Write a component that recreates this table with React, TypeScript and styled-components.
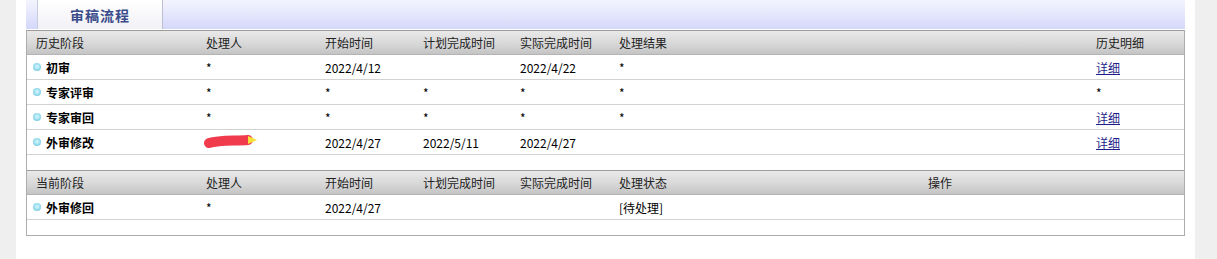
import React from "react";
import styled, { createGlobalStyle } from "styled-components";

const GlobalStyle = createGlobalStyle`
  html, body {
    margin: 0;
    padding: 0;
    background: #efefef;
  }
  body {
    font-family: "Noto Sans CJK SC", "Noto Sans", sans-serif;
    font-size: 12px;
    color: #000;
  }
`;

const HISTORY_COLS = "169px 119px 98px 97px 99px 1fr 98px";
const CURRENT_COLS = "169px 119px 98px 97px 99px 309px 1fr";

const Page = styled.div`
  display: flex;
  min-height: 259px;
  padding: 0 22px 0 16px;
`;

const Panel = styled.div`
  flex: 1;
  background: #fff;
  padding: 0 10px;
  display: flex;
  flex-direction: column;
`;

const TabBar = styled.div`
  height: 29px;
  display: flex;
  padding-left: 11px;
  background: linear-gradient(#f4f4fe, #d4d8f9);
  margin-bottom: 1px;
`;

const Tab = styled.div`
  width: 124px;
  display: flex;
  align-items: center;
  justify-content: center;
  background: linear-gradient(#ffffff, #f1f1f6);
  border-left: 1px solid #c8cce0;
  border-right: 1px solid #bcc0d2;
  font-weight: bold;
  font-size: 14px;
  letter-spacing: 1px;
  color: #3b4c8c;
`;

const Table = styled.div`
  border: 1px solid #acacac;
  border-top: none;
`;

const HeaderRow = styled.div<{ $cols: string }>`
  display: grid;
  grid-template-columns: ${(p) => p.$cols};
  height: 23px;
  align-items: center;
  border-top: 1px solid #9c9c9c;
  border-bottom: 1px solid #b4b4b4;
  background: linear-gradient(#e9e9e9, #d6d6d6 60%, #c4c4c4);
  color: #222;
`;

const Row = styled.div<{ $cols: string }>`
  display: grid;
  grid-template-columns: ${(p) => p.$cols};
  height: 24px;
  align-items: center;
  border-bottom: 1px solid #d2d2d2;
`;

const Blank = styled.div<{ $h: number }>`
  height: ${(p) => p.$h}px;
`;

const Cell = styled.div<{ $pad?: number }>`
  padding-left: ${(p) => p.$pad ?? 10}px;
  white-space: nowrap;
  display: flex;
  align-items: center;
`;

const Stage = styled(Cell)`
  padding-left: 6px;
  gap: 5px;
  font-weight: bold;
`;

const Dot = styled.span`
  width: 8px;
  height: 8px;
  border-radius: 50%;
  background: radial-gradient(circle at 50% 45%, #d8f6fc 0%, #a8e4f2 40%, #72c8de 80%, #9ad6e6 100%);
`;

const DetailLink = styled.a`
  color: #1f1f8a;
  text-decoration: underline;
  cursor: pointer;
`;

const Redacted = () => (
  <svg width="58" height="16" viewBox="0 0 58 16" style={{ marginLeft: -3 }}>
    <path d="M6 9 C16 6, 30 7, 45 6" stroke="#ef3b4b" strokeWidth="10" strokeLinecap="round" fill="none" />
    <polygon points="45,2 54,6 45,10" fill="#f2e23a" />
  </svg>
);

type HistoryItem = {
  stage: string;
  person: React.ReactNode;
  start: string;
  plan: string;
  actual: string;
  result: string;
  detail: "link" | "*" | "";
};

const history: HistoryItem[] = [
  { stage: "初审", person: "*", start: "2022/4/12", plan: "", actual: "2022/4/22", result: "*", detail: "link" },
  { stage: "专家评审", person: "*", start: "*", plan: "*", actual: "*", result: "*", detail: "*" },
  { stage: "专家审回", person: "*", start: "*", plan: "*", actual: "*", result: "*", detail: "link" },
  { stage: "外审修改", person: <Redacted />, start: "2022/4/27", plan: "2022/5/11", actual: "2022/4/27", result: "", detail: "link" },
];

export default function App() {
  return (
    <>
      <GlobalStyle />
      <Page>
        <Panel>
          <TabBar>
            <Tab>审稿流程</Tab>
          </TabBar>
          <Table>
            <HeaderRow $cols={HISTORY_COLS}>
              <Cell $pad={9}>历史阶段</Cell>
              <Cell>处理人</Cell>
              <Cell>开始时间</Cell>
              <Cell>计划完成时间</Cell>
              <Cell>实际完成时间</Cell>
              <Cell>处理结果</Cell>
              <Cell>历史明细</Cell>
            </HeaderRow>
            {history.map((h) => (
              <Row key={h.stage} $cols={HISTORY_COLS}>
                <Stage>
                  <Dot />
                  {h.stage}
                </Stage>
                <Cell>{h.person}</Cell>
                <Cell>{h.start}</Cell>
                <Cell>{h.plan}</Cell>
                <Cell>{h.actual}</Cell>
                <Cell>{h.result}</Cell>
                <Cell>{h.detail === "link" ? <DetailLink>详细</DetailLink> : h.detail}</Cell>
              </Row>
            ))}
            <Blank $h={15} />
            <HeaderRow $cols={CURRENT_COLS}>
              <Cell $pad={9}>当前阶段</Cell>
              <Cell>处理人</Cell>
              <Cell>开始时间</Cell>
              <Cell>计划完成时间</Cell>
              <Cell>实际完成时间</Cell>
              <Cell>处理状态</Cell>
              <Cell>操作</Cell>
            </HeaderRow>
            <Row $cols={CURRENT_COLS}>
              <Stage>
                <Dot />
                外审修回
              </Stage>
              <Cell>*</Cell>
              <Cell>2022/4/27</Cell>
              <Cell></Cell>
              <Cell></Cell>
              <Cell>[待处理]</Cell>
              <Cell></Cell>
            </Row>
            <Blank $h={15} />
          </Table>
        </Panel>
      </Page>
    </>
  );
}
